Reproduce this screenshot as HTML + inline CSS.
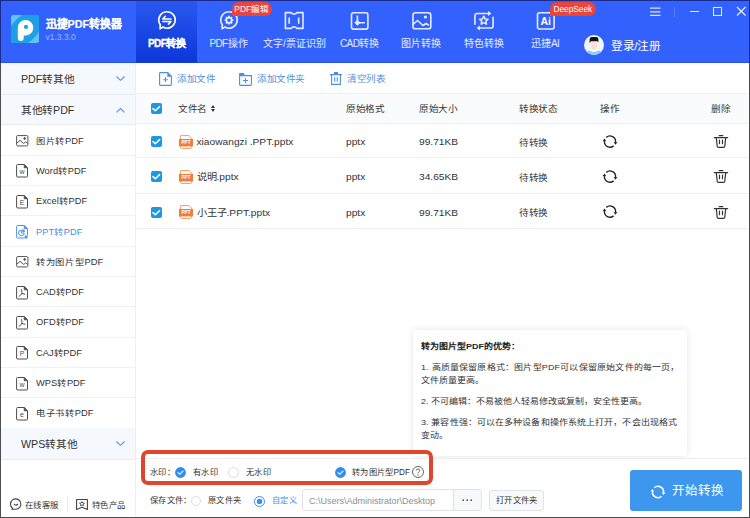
<!DOCTYPE html><html lang="zh-CN"><head><meta charset="utf-8"><style>
*{box-sizing:border-box;margin:0;padding:0}
html,body{width:750px;height:518px;overflow:hidden;background:#fff}
body{position:relative;font-family:"Liberation Sans",sans-serif;color:#333;font-size:10px}
.a{position:absolute;white-space:nowrap;line-height:1}
svg.a{overflow:visible}
.tl{position:absolute;top:39px;color:#e6ecff;font-size:10px;white-space:nowrap;line-height:1}
.badge{position:absolute;height:14.5px;background:#e9453b;color:#fff;font-size:8.3px;line-height:14.5px;border-radius:7px 7px 7px 1px;white-space:nowrap;text-align:center}
.sec{position:absolute;left:1px;width:134px;height:31px;background:#f5f8fd;border-bottom:1px solid #e8ecf2;font-size:11px;color:#333}
.sec .lat{letter-spacing:0}
.sec>span{position:absolute;left:19.8px;top:10.5px;line-height:1;transform:scale(.97);transform-origin:0 0}
.item{position:absolute;left:1px;width:134px;border-bottom:1px solid #eef1f5;font-size:9.6px;color:#333}
.item .lat{letter-spacing:0}
.item>span{position:absolute;left:35px;line-height:1;transform:scale(.97,.86);transform-origin:0 55%}
.item svg{position:absolute;left:15.3px;overflow:visible}
.cb{position:absolute;width:11px;height:11px;background:#1a98e2;border-radius:2px}
.cb svg{position:absolute;left:0;top:0}
.lat{letter-spacing:-0.6px}
.q{transform:scale(.96,.86);transform-origin:0 55%}
.qy{transform:scaleY(.9);transform-origin:0 55%}
.qt{transform:scaleY(.89);transform-origin:0 55%}
</style></head><body>
<div class="a" style="left:0;top:0;width:750px;height:63px;background:#3361fd"></div>
<div class="a" style="left:136px;top:0;width:61px;height:63px;background:linear-gradient(#2a59f0,#0b36d9)"></div>
<div class="a" style="left:0;top:62px;width:750px;height:1px;background:#1f3fc8;opacity:.5"></div>
<svg class="a" style="left:11px;top:15px" width="28" height="28" viewBox="0 0 28 28"><defs><clipPath id="lc"><rect width="28" height="28" rx="2.5"/></clipPath></defs><g clip-path="url(#lc)"><rect width="28" height="28" fill="#62c2f1"/><ellipse cx="14" cy="14" rx="24" ry="12.7" transform="rotate(-45 14 14)" fill="#1fa0e6"/><path fill="#fff" fill-rule="evenodd" d="M6.8 12.75A7.75 7.75 0 1 1 14.55 20.5H12.7V23Q12.7 25.9 9.75 25.9Q6.8 25.9 6.8 23Z M17.1 11.9A2.1 2.1 0 1 0 12.9 11.9A2.1 2.1 0 1 0 17.1 11.9Z"/></g></svg>
<div class="a" style="left:45.5px;top:18.5px;color:#fff;font-size:11px;font-weight:bold;-webkit-text-stroke:.2px #fff;transform:scaleX(.98);transform-origin:0 0">迅捷PDF转换器</div>
<div class="a" style="left:45.5px;top:33px;color:#9fb4fa;font-size:8.5px">v1.3.3.0</div>
<svg class="a" style="left:156.5px;top:10px" width="20" height="20" viewBox="0 0 20 20" fill="none" stroke="#fff" stroke-width="1.7" stroke-linejoin="round"><path d="M5.9 17.1 A8.2 8.2 0 1 0 3.28 14.7 L3.1 18.7Z"/><path d="M14 8.9H5.8L8.4 6.3M5.8 11.5H14L11.4 14.1" stroke-width="1.5" stroke-linecap="round"/></svg>
<div class="tl" style="left:148px;color:#fff;font-weight:bold;-webkit-text-stroke:.3px #fff"><span class="lat">PDF</span>转换</div>
<svg class="a" style="left:218.7px;top:10px" width="20" height="20" viewBox="0 0 20 20" fill="none" stroke="#e6ecff" stroke-width="1.7" stroke-linejoin="round"><path d="M5.9 17.1 A8.2 8.2 0 1 0 3.28 14.7 L3.1 18.7Z"/><circle cx="10" cy="10.2" r="2.6" stroke-width="1.6"/><path d="M12.80 10.00L14.40 10.00M11.98 11.98L13.11 13.11M10.00 12.80L10.00 14.40M8.02 11.98L6.89 13.11M7.20 10.00L5.60 10.00M8.02 8.02L6.89 6.89M10.00 7.20L10.00 5.60M11.98 8.02L13.11 6.89" transform="translate(0 .2)" stroke-width="1.8"/></svg>
<div class="tl" style="left:209.4px"><span class="lat">PDF</span>操作</div>
<div class="badge" style="left:232px;top:1.8px;width:39.5px;font-size:8.5px">PDF编辑</div>
<svg class="a" style="left:284px;top:11px" width="20" height="19" viewBox="0 0 20 19" fill="none" stroke="#e6ecff" stroke-width="1.6" stroke-linejoin="round"><path d="M1.4 1.6H7Q10 4.6 13 1.6H19V17.4H13Q10 14.4 7 17.4H1.4Z"/><path d="M5.2 6.4V12.8M14.7 6.4V12.8"/></svg>
<div class="tl" style="left:263px">文字/票证识别</div>
<svg class="a" style="left:350px;top:11px" width="20" height="20" viewBox="0 0 20 20" fill="none" stroke="#e6ecff" stroke-width="1.6"><rect x="1.5" y="1.8" width="16.4" height="16.3" rx="2.2"/><path d="M7.4 4.4V11.7H14.9"/><path d="M7.4 8.7L10.4 11.7L7.4 14.7L4.4 11.7Z" fill="#e6ecff" stroke="none"/></svg>
<div class="tl" style="left:340px"><span class="lat">CAD</span>转换</div>
<svg class="a" style="left:411px;top:11px" width="22" height="20" viewBox="0 0 22 20" fill="none" stroke="#e6ecff" stroke-width="1.6"><rect x="2" y="1.8" width="17.8" height="16" rx="2.4"/><path d="M2 13.5L6.5 9.5L12 14.5L15 12.5L17.5 14" stroke-linejoin="round" stroke-linecap="round"/><circle cx="14.4" cy="6" r="1.6" fill="#e6ecff" stroke="none"/></svg>
<div class="tl" style="left:401.2px">图片转换</div>
<svg class="a" style="left:473px;top:10px" width="22" height="21" viewBox="0 0 22 21" fill="none" stroke="#e6ecff" stroke-width="1.6" stroke-linecap="round"><path d="M1.9 14.2V5.8Q1.9 3.5 4.2 3.5H15.5"/><path d="M15 1L18.5 3.5L15 6Z" fill="#e6ecff" stroke="none"/><path d="M20.1 7.2V15.7Q20.1 18 17.8 18H6.5"/><path d="M7 15.5L3.5 18L7 20.5Z" fill="#e6ecff" stroke="none"/><path d="M10.8 6.2l1.3 2.7 2.9.35-2.15 2 .6 2.9-2.65-1.5-2.65 1.5.6-2.9-2.15-2 2.9-.35z" stroke-width="1.5" stroke-linejoin="round"/></svg>
<div class="tl" style="left:464px">特色转换</div>
<svg class="a" style="left:536px;top:11px" width="20" height="20" viewBox="0 0 20 20" fill="none" stroke="#e6ecff" stroke-width="1.6"><rect x="1.5" y="1.8" width="16.6" height="16.2" rx="2"/></svg>
<div class="a" style="left:540.5px;top:16px;color:#fff;font-size:10.5px;font-weight:bold">Ai</div>
<div class="tl" style="left:531px">迅捷<span class="lat">AI</span></div>
<div class="badge" style="left:549.7px;top:1.6px;width:46.3px">DeepSeek</div>
<div class="a" style="left:584px;top:35px;width:20px;height:20px;border-radius:50%;background:#f1f4f9;overflow:hidden">
<svg width="20" height="20" viewBox="0 0 20 20"><path d="M1 21 Q2.5 15.2 7.5 14.8 Q10 16 12.5 14.8 Q17.5 15.2 19 21z" fill="#8ad0ef"/><path d="M5.5 15.6 Q10 18.2 14.5 15.6 L13.2 13.6 Q10 15.4 6.8 13.6z" fill="#fff"/><ellipse cx="10" cy="10.6" rx="3" ry="4.4" fill="#fbdfd0"/><path d="M5.6 8.8 V4.2 Q5.6 1.9 8 1.9 H12 Q14.4 1.9 14.4 4.2 V7.6 Q14 6.3 12.9 6.3 H7.2 Q6.1 6.3 5.6 8.8z" fill="#121316"/></svg></div>
<div class="a" style="left:611px;top:40px;color:#fff;font-size:12px;transform:scale(.965);transform-origin:0 0">登录/注册</div>
<svg class="a" style="left:650px;top:7px" width="11" height="10" viewBox="0 0 11 10" stroke="#d9e1ff" stroke-width="1.2"><path d="M0 1.2h10.5M0 4.8h10.5M0 8.4h10.5"/></svg>
<div class="a" style="left:674px;top:7px;width:1px;height:10px;background:#5c7ef9"></div>
<div class="a" style="left:690px;top:10.5px;width:9px;height:1.3px;background:#e9eeff"></div>
<div class="a" style="left:713px;top:7.3px;width:9.2px;height:8.4px;border:1.3px solid #e9eeff"></div>
<svg class="a" style="left:737px;top:6.8px" width="8.5" height="8.5" viewBox="0 0 8.5 8.5" stroke="#e9eeff" stroke-width="1.2"><path d="M0 0L8.5 8.5M8.5 0L0 8.5"/></svg>
<div class="a" style="left:135px;top:63px;width:1px;height:455px;background:#eceff4"></div>
<div class="sec" style="top:63px;height:32px"><span><span class="lat">PDF</span>转其他</span><svg class="a" style="left:115px;top:12.8px" width="9" height="5" viewBox="0 0 9 5" fill="none" stroke="#5b91d8" stroke-width="1.1"><path d="M0.5 0.5 L4.5 4.3 L8.5 0.5"/></svg></div>
<div class="sec" style="top:95px;height:30px"><span style="top:9.5px">其他转<span class="lat">PDF</span></span><svg class="a" style="left:115px;top:12.5px" width="9" height="5" viewBox="0 0 9 5" fill="none" stroke="#5b91d8" stroke-width="1.1"><path d="M0.5 4.3 L4.5 0.5 L8.5 4.3"/></svg></div>
<div class="item" style="top:125.6px;height:30.3px"><svg style="top:9.6px" width="12.5" height="11.5" viewBox="0 0 13 12" fill="none" stroke="#4d4d4d" stroke-width="1"><rect x=".6" y=".6" width="11.8" height="10.8" rx="1.2"/><path d="M.8 8.6L4.2 5.6L8 8.8L10 7.2L12.2 8.8"/><circle cx="9" cy="3.6" r=".9" fill="#4d4d4d"/></svg><span style="top:10px">图片转<span class="lat">PDF</span></span></div>
<div class="item" style="top:155.9px;height:30.3px"><svg style="top:8.6px" width="12" height="13.5" viewBox="0 0 12 13.5" fill="none" stroke="#4d4d4d" stroke-width="1"><path d="M1.6 .5H8.2L11.5 3.8V12Q11.5 13 10.5 13H1.6Q.6 13 .6 12V1.5Q.6 .5 1.6 .5z"/><path d="M8.2 .5V3.8H11.5Z" stroke-width=".8" fill="#4d4d4d"/><text x="6" y="9.9" font-size="7" fill="#4d4d4d" stroke="none" text-anchor="middle" font-family="Liberation Sans">w</text></svg><span style="top:10px"><span class="lat">Word</span>转<span class="lat">PDF</span></span></div>
<div class="item" style="top:186.2px;height:30.3px"><svg style="top:8.6px" width="12" height="13.5" viewBox="0 0 12 13.5" fill="none" stroke="#4d4d4d" stroke-width="1"><path d="M1.6 .5H8.2L11.5 3.8V12Q11.5 13 10.5 13H1.6Q.6 13 .6 12V1.5Q.6 .5 1.6 .5z"/><path d="M8.2 .5V3.8H11.5Z" stroke-width=".8" fill="#4d4d4d"/><text x="6" y="9.9" font-size="7" fill="#4d4d4d" stroke="none" text-anchor="middle" font-family="Liberation Sans">E</text></svg><span style="top:10px"><span class="lat">Excel</span>转<span class="lat">PDF</span></span></div>
<div class="item" style="top:216.5px;height:30.3px;color:#4a8ee0"><svg style="top:8.6px" width="12" height="13.5" viewBox="0 0 12 13.5" fill="none" stroke="#4f94e4" stroke-width="1"><path d="M1.6 .5H8.2L11.5 3.8V12Q11.5 13 10.5 13H1.6Q.6 13 .6 12V1.5Q.6 .5 1.6 .5z"/><path d="M8.2 .5V3.8H11.5Z" stroke-width=".8" fill="#4f94e4"/><path d="M5.3 5A2.9 2.9 0 1 0 8.3 8H5.3z" stroke-width="1" stroke-linejoin="round"/><path d="M6.3 4.2A2.8 2.8 0 0 1 9 6.9H6.3z" fill="#4f94e4" stroke="none"/><circle cx="10" cy="12" r="1.9" fill="#4f94e4" stroke="#fff" stroke-width=".6"/></svg><span style="top:10px"><span class="lat">PPT</span>转<span class="lat">PDF</span></span></div>
<div class="item" style="top:246.8px;height:30.3px"><svg style="top:9.6px" width="12.5" height="11.5" viewBox="0 0 13 12" fill="none" stroke="#4d4d4d" stroke-width="1"><rect x=".6" y=".6" width="11.8" height="10.8" rx="1.2"/><path d="M.8 8.6L4.2 5.6L8 8.8L10 7.2L12.2 8.8"/><circle cx="9" cy="3.6" r=".9" fill="#4d4d4d"/></svg><span style="top:10px">转为图片型<span class="lat">PDF</span></span></div>
<div class="item" style="top:277.1px;height:30.3px"><svg style="top:8.6px" width="12" height="13.5" viewBox="0 0 12 13.5" fill="none" stroke="#4d4d4d" stroke-width="1"><path d="M1.6 .5H8.2L11.5 3.8V12Q11.5 13 10.5 13H1.6Q.6 13 .6 12V1.5Q.6 .5 1.6 .5z"/><path d="M8.2 .5V3.8H11.5Z" stroke-width=".8" fill="#4d4d4d"/><path d="M5.6 3.6Q5.9 5.8 6 7.6L3 10.4M6 7.6L8.9 8.2" stroke-width="1" stroke-linecap="round" stroke-linejoin="round"/></svg><span style="top:10px"><span class="lat">CAD</span>转<span class="lat">PDF</span></span></div>
<div class="item" style="top:307.4px;height:30.3px"><svg style="top:8.6px" width="12" height="13.5" viewBox="0 0 12 13.5" fill="none" stroke="#4d4d4d" stroke-width="1"><path d="M1.6 .5H8.2L11.5 3.8V12Q11.5 13 10.5 13H1.6Q.6 13 .6 12V1.5Q.6 .5 1.6 .5z"/><path d="M8.2 .5V3.8H11.5Z" stroke-width=".8" fill="#4d4d4d"/><path d="M5.6 3.6Q5.9 5.8 6 7.6L3 10.4M6 7.6L8.9 8.2" stroke-width="1" stroke-linecap="round" stroke-linejoin="round"/></svg><span style="top:10px"><span class="lat">OFD</span>转<span class="lat">PDF</span></span></div>
<div class="item" style="top:337.7px;height:30.3px"><svg style="top:8.6px" width="12" height="13.5" viewBox="0 0 12 13.5" fill="none" stroke="#4d4d4d" stroke-width="1"><path d="M1.6 .5H8.2L11.5 3.8V12Q11.5 13 10.5 13H1.6Q.6 13 .6 12V1.5Q.6 .5 1.6 .5z"/><path d="M8.2 .5V3.8H11.5Z" stroke-width=".8" fill="#4d4d4d"/><text x="6" y="9.9" font-size="7" fill="#4d4d4d" stroke="none" text-anchor="middle" font-family="Liberation Sans">P</text></svg><span style="top:10px"><span class="lat">CAJ</span>转<span class="lat">PDF</span></span></div>
<div class="item" style="top:368.0px;height:30.3px"><svg style="top:8.6px" width="12" height="13.5" viewBox="0 0 12 13.5" fill="none" stroke="#4d4d4d" stroke-width="1"><path d="M1.6 .5H8.2L11.5 3.8V12Q11.5 13 10.5 13H1.6Q.6 13 .6 12V1.5Q.6 .5 1.6 .5z"/><path d="M8.2 .5V3.8H11.5Z" stroke-width=".8" fill="#4d4d4d"/><text x="6" y="9.9" font-size="7" fill="#4d4d4d" stroke="none" text-anchor="middle" font-family="Liberation Sans">w</text></svg><span style="top:10px"><span class="lat">WPS</span>转<span class="lat">PDF</span></span></div>
<div class="item" style="top:398.3px;height:30.3px"><svg style="top:8.6px" width="12" height="13.5" viewBox="0 0 12 13.5" fill="none" stroke="#4d4d4d" stroke-width="1"><path d="M1.6 .5H8.2L11.5 3.8V12Q11.5 13 10.5 13H1.6Q.6 13 .6 12V1.5Q.6 .5 1.6 .5z"/><path d="M8.2 .5V3.8H11.5Z" stroke-width=".8" fill="#4d4d4d"/><text x="6" y="9.9" font-size="7" fill="#4d4d4d" stroke="none" text-anchor="middle" font-family="Liberation Sans">e</text></svg><span style="top:10px">电子书转<span class="lat">PDF</span></span></div>
<div class="sec" style="top:428px;height:32px"><span><span class="lat">WPS</span>转其他</span><svg class="a" style="left:115px;top:13px" width="9" height="5" viewBox="0 0 9 5" fill="none" stroke="#5b91d8" stroke-width="1.1"><path d="M0.5 0.5 L4.5 4.3 L8.5 0.5"/></svg></div>
<svg class="a" style="left:10px;top:497.6px" width="12" height="12" viewBox="0 0 12 12" fill="none" stroke="#444" stroke-width="1.1"><path d="M2.6 10.3A5.2 5.2 0 1 1 5.8 11.3H1.8z" stroke-linejoin="round"/><path d="M3.8 6Q5.8 8.2 8 6"/></svg>
<div class="a" style="left:25px;top:500.8px;font-size:9px;color:#333;transform:scale(.93);transform-origin:0 0">在线客服</div>
<div class="a" style="left:66.5px;top:497px;width:1px;height:14px;background:#e5e8ee"></div>
<svg class="a" style="left:76px;top:498.8px" width="12" height="11" viewBox="0 0 12 12" preserveAspectRatio="none" fill="none" stroke="#444" stroke-width="1.1"><path d="M.6 .6H11.4V11.4L6 9L.6 11.4z" stroke-linejoin="round"/><path d="M6 2.8l.8 1.6 1.7.2-1.3 1.1.4 1.7L6 6.5 4.4 7.4l.4-1.7L3.5 4.6l1.7-.2z" stroke-width=".9" stroke-linejoin="round"/></svg>
<div class="a" style="left:92px;top:500.8px;font-size:9px;color:#333;transform:scale(.93);transform-origin:0 0">特色产品</div>
<svg class="a" style="left:159px;top:72px" width="13" height="14" viewBox="0 0 13 14" fill="none" stroke="#4d8fe0" stroke-width="1.1"><path d="M1.5 .6H8.8L12.4 4.2V12.5Q12.4 13.4 11.5 13.4H1.5Q.6 13.4 .6 12.5V1.5Q.6 .6 1.5 .6z"/><path d="M8.3 .3L12.7 4.7H8.3z" fill="#4d8fe0" stroke="none"/><path d="M6.5 5.3V10M4.2 7.7H8.8"/></svg>
<div class="a q" style="left:176.5px;top:73.9px;font-size:10px;color:#4d8fe0">添加文件</div>
<svg class="a" style="left:239px;top:72.5px" width="13" height="13" viewBox="0 0 13 13" fill="none" stroke="#4d8fe0" stroke-width="1.1"><path d="M.6 2.6H12.4V11.5Q12.4 12.4 11.5 12.4H1.5Q.6 12.4 .6 11.5z"/><path d="M.1 .1H4.8L5.8 2.6H.1z" fill="#4d8fe0" stroke="none"/><path d="M6.5 5V10M4 7.5H9"/></svg>
<div class="a q" style="left:256.5px;top:73.9px;font-size:10px;color:#4d8fe0">添加文件夹</div>
<svg class="a" style="left:329.5px;top:72px" width="12" height="13" viewBox="0 0 12 13" fill="none" stroke="#4d8fe0" stroke-width="1.1"><path d="M0 2.6H12M1.6 2.6V12.4H10.4V2.6M4.7 5.2V9.8M7.3 5.2V9.8"/><path d="M4 0H8V2H4z" fill="#4d8fe0" stroke="none"/></svg>
<div class="a q" style="left:346.5px;top:73.9px;font-size:10px;color:#4d8fe0">清空列表</div>
<div class="a" style="left:136px;top:93px;width:612px;height:31px;background:#fafbfc;border-top:1px solid #eff0f3;border-bottom:1px solid #eeeff2"></div>
<div class="cb" style="left:151.2px;top:103px"><svg width="11" height="11" viewBox="0 0 11 11" fill="none" stroke="#fff" stroke-width="1.5" stroke-linecap="round" stroke-linejoin="round"><path d="M2 5.6L4.3 7.7L8.6 3.6"/></svg></div>
<div class="a q" style="left:177.5px;top:104px;font-size:10px;color:#333">文件名</div>
<div class="a q" style="left:345.5px;top:104px;font-size:10px;color:#333">原始格式</div>
<div class="a q" style="left:419px;top:104px;font-size:10px;color:#333">原始大小</div>
<div class="a q" style="left:519px;top:104px;font-size:10px;color:#333">转换状态</div>
<div class="a q" style="left:599.5px;top:104px;font-size:10px;color:#333">操作</div>
<div class="a q" style="left:711px;top:104px;font-size:10px;color:#333">删除</div>
<svg class="a" style="left:211.3px;top:105.3px" width="4" height="7" viewBox="0 0 4 7" fill="#333"><path d="M0 3H4L2 0z M0 4H4L2 7z"/></svg>
<div class="a" style="left:136px;top:123.30px;width:612px;height:35.15px;border-bottom:1px solid #eeeff2"></div>
<div class="cb" style="left:151.2px;top:136.2px"><svg width="11" height="11" viewBox="0 0 11 11" fill="none" stroke="#fff" stroke-width="1.5" stroke-linecap="round" stroke-linejoin="round"><path d="M2 5.6L4.3 7.7L8.6 3.6"/></svg></div>
<svg class="a" style="left:178.7px;top:134.7px" width="14" height="14" viewBox="0 0 14 14"><path d="M2 .6H10L12.6 3.2V12.4Q12.6 13.4 11.6 13.4H2.4Q1.4 13.4 1.4 12.4V1.2Q1.4 .6 2 .6z" fill="#fff" stroke="#f39a63" stroke-width="1"/><path d="M0 4H14V11.4H0z" fill="#f37d36"/><text x="7" y="9.4" font-size="4.6" fill="#fff" text-anchor="middle" font-family="Liberation Sans" font-weight="bold">PPT</text></svg>
<div class="a qy" style="left:196.5px;top:137.3px;font-size:10.2px;color:#333">xiaowangzi .PPT.pptx</div>
<div class="a qy" style="left:346px;top:137.3px;font-size:10.2px;color:#333">pptx</div>
<div class="a qy" style="left:419px;top:137.3px;font-size:10.2px;color:#333">99.71KB</div>
<div class="a q" style="left:519px;top:138.0px;font-size:10px;color:#333">待转换</div>
<svg class="a" style="left:602.5px;top:134.7px" width="14" height="14" viewBox="0 0 14 14"><path d="M3.33 2.37A5.6 5.6 0 0 1 12.58 7.09M10.60 10.89A5.6 5.6 0 0 1 1.42 6.11" fill="none" stroke="#1e1e1e" stroke-width="1.35"/><path d="M14.37 7.24L10.79 6.93L12.35 9.68zM-0.37 5.96L3.21 6.27L1.65 3.52z" fill="#1e1e1e"/></svg>
<svg class="a" style="left:714px;top:135.2px" width="14" height="13" viewBox="0 0 14 13" fill="none" stroke="#333" stroke-width="1.2"><path d="M.3 2.6H13.7M5.2 .7H8.8M2.3 2.6L3.2 11.3Q3.3 12.4 4.4 12.4H9.6Q10.7 12.4 10.8 11.3L11.7 2.6M5.5 5.2V8.7M8.5 5.2V8.7" stroke-linecap="round"/></svg>
<div class="a" style="left:136px;top:158.45px;width:612px;height:35.15px;border-bottom:1px solid #eeeff2"></div>
<div class="cb" style="left:151.2px;top:171.3px"><svg width="11" height="11" viewBox="0 0 11 11" fill="none" stroke="#fff" stroke-width="1.5" stroke-linecap="round" stroke-linejoin="round"><path d="M2 5.6L4.3 7.7L8.6 3.6"/></svg></div>
<svg class="a" style="left:178.7px;top:169.8px" width="14" height="14" viewBox="0 0 14 14"><path d="M2 .6H10L12.6 3.2V12.4Q12.6 13.4 11.6 13.4H2.4Q1.4 13.4 1.4 12.4V1.2Q1.4 .6 2 .6z" fill="#fff" stroke="#f39a63" stroke-width="1"/><path d="M0 4H14V11.4H0z" fill="#f37d36"/><text x="7" y="9.4" font-size="4.6" fill="#fff" text-anchor="middle" font-family="Liberation Sans" font-weight="bold">PPT</text></svg>
<div class="a qy" style="left:196.5px;top:172.4px;font-size:10.2px;color:#333">说明.pptx</div>
<div class="a qy" style="left:346px;top:172.4px;font-size:10.2px;color:#333">pptx</div>
<div class="a qy" style="left:419px;top:172.4px;font-size:10.2px;color:#333">34.65KB</div>
<div class="a q" style="left:519px;top:173.2px;font-size:10px;color:#333">待转换</div>
<svg class="a" style="left:602.5px;top:169.8px" width="14" height="14" viewBox="0 0 14 14"><path d="M3.33 2.37A5.6 5.6 0 0 1 12.58 7.09M10.60 10.89A5.6 5.6 0 0 1 1.42 6.11" fill="none" stroke="#1e1e1e" stroke-width="1.35"/><path d="M14.37 7.24L10.79 6.93L12.35 9.68zM-0.37 5.96L3.21 6.27L1.65 3.52z" fill="#1e1e1e"/></svg>
<svg class="a" style="left:714px;top:170.3px" width="14" height="13" viewBox="0 0 14 13" fill="none" stroke="#333" stroke-width="1.2"><path d="M.3 2.6H13.7M5.2 .7H8.8M2.3 2.6L3.2 11.3Q3.3 12.4 4.4 12.4H9.6Q10.7 12.4 10.8 11.3L11.7 2.6M5.5 5.2V8.7M8.5 5.2V8.7" stroke-linecap="round"/></svg>
<div class="a" style="left:136px;top:193.60px;width:612px;height:35.15px;border-bottom:1px solid #eeeff2"></div>
<div class="cb" style="left:151.2px;top:206.5px"><svg width="11" height="11" viewBox="0 0 11 11" fill="none" stroke="#fff" stroke-width="1.5" stroke-linecap="round" stroke-linejoin="round"><path d="M2 5.6L4.3 7.7L8.6 3.6"/></svg></div>
<svg class="a" style="left:178.7px;top:205.0px" width="14" height="14" viewBox="0 0 14 14"><path d="M2 .6H10L12.6 3.2V12.4Q12.6 13.4 11.6 13.4H2.4Q1.4 13.4 1.4 12.4V1.2Q1.4 .6 2 .6z" fill="#fff" stroke="#f39a63" stroke-width="1"/><path d="M0 4H14V11.4H0z" fill="#f37d36"/><text x="7" y="9.4" font-size="4.6" fill="#fff" text-anchor="middle" font-family="Liberation Sans" font-weight="bold">PPT</text></svg>
<div class="a qy" style="left:196.5px;top:207.6px;font-size:10.2px;color:#333">小王子.PPT.pptx</div>
<div class="a qy" style="left:346px;top:207.6px;font-size:10.2px;color:#333">pptx</div>
<div class="a qy" style="left:419px;top:207.6px;font-size:10.2px;color:#333">99.71KB</div>
<div class="a q" style="left:519px;top:208.3px;font-size:10px;color:#333">待转换</div>
<svg class="a" style="left:602.5px;top:205.0px" width="14" height="14" viewBox="0 0 14 14"><path d="M3.33 2.37A5.6 5.6 0 0 1 12.58 7.09M10.60 10.89A5.6 5.6 0 0 1 1.42 6.11" fill="none" stroke="#1e1e1e" stroke-width="1.35"/><path d="M14.37 7.24L10.79 6.93L12.35 9.68zM-0.37 5.96L3.21 6.27L1.65 3.52z" fill="#1e1e1e"/></svg>
<svg class="a" style="left:714px;top:205.5px" width="14" height="13" viewBox="0 0 14 13" fill="none" stroke="#333" stroke-width="1.2"><path d="M.3 2.6H13.7M5.2 .7H8.8M2.3 2.6L3.2 11.3Q3.3 12.4 4.4 12.4H9.6Q10.7 12.4 10.8 11.3L11.7 2.6M5.5 5.2V8.7M8.5 5.2V8.7" stroke-linecap="round"/></svg>
<div class="a" style="left:412.8px;top:329.6px;width:274px;height:126.4px;background:#fff;border-radius:3px;box-shadow:0 0 7px rgba(0,0,0,.11)"></div>
<div class="a qt" style="left:421px;top:342px;font-size:9px;font-weight:bold;color:#222">转为图片型PDF的优势：</div>
<div class="a qt" style="left:421px;top:362.5px;font-size:9px;color:#333;letter-spacing:.18px">1. 高质量保留原格式：图片型PDF可以保留原始文件的每一页，</div>
<div class="a qt" style="left:421px;top:375.5px;font-size:9px;color:#333">文件质量更高。</div>
<div class="a qt" style="left:421px;top:397px;font-size:9px;color:#333">2. 不可编辑：不易被他人轻易修改或复制，安全性更高。</div>
<div class="a qt" style="left:421px;top:417.5px;font-size:9px;color:#333;letter-spacing:.1px">3. 兼容性强：可以在多种设备和操作系统上打开，不会出现格式</div>
<div class="a qt" style="left:421px;top:431px;font-size:9px;color:#333">变动。</div>
<div class="a" style="left:136px;top:458px;width:612px;height:1px;background:#eceef2"></div>
<div class="a" style="left:149.5px;top:468.5px;font-size:9px;color:#333;transform:scale(.92);transform-origin:0 0">水印：</div>
<svg class="a" style="left:174.8px;top:466.8px" width="11" height="11" viewBox="0 0 11 11"><circle cx="5.5" cy="5.5" r="5.4" fill="#2f8ff0"/><path d="M3 5.7L4.8 7.3L8 4.1" fill="none" stroke="#fff" stroke-width="1.1" stroke-linecap="round"/></svg>
<div class="a" style="left:193px;top:468.5px;font-size:9px;color:#333;transform:scale(.92);transform-origin:0 0">有水印</div>
<div class="a" style="left:227.8px;top:466.8px;width:11px;height:11px;border-radius:50%;border:1px solid #d9dde4"></div>
<div class="a" style="left:246px;top:468.5px;font-size:9px;color:#333;transform:scale(.92);transform-origin:0 0">无水印</div>
<svg class="a" style="left:335px;top:466.8px" width="11" height="11" viewBox="0 0 11 11"><circle cx="5.5" cy="5.5" r="5.4" fill="#2f8ff0"/><path d="M3 5.7L4.8 7.3L8 4.1" fill="none" stroke="#fff" stroke-width="1.1" stroke-linecap="round"/></svg>
<div class="a" style="left:351.7px;top:468.5px;font-size:9px;color:#333;transform:scale(.92);transform-origin:0 0">转为图片型PDF</div>
<svg class="a" style="left:412px;top:466px" width="12" height="12" viewBox="0 0 12 12"><circle cx="6" cy="6" r="5.5" fill="none" stroke="#555" stroke-width=".9"/><path d="M4.3 4.6Q4.3 3 6 3Q7.7 3 7.7 4.5Q7.7 5.4 6.8 5.9Q6 6.3 6 7.3" fill="none" stroke="#555" stroke-width=".9"/><circle cx="6" cy="8.9" r=".6" fill="#555"/></svg>
<div class="a" style="left:141px;top:450px;width:291.5px;height:34.5px;border:4px solid #e1452c;border-radius:7px"></div>
<div class="a" style="left:150px;top:496.5px;font-size:9px;color:#333;transform:scale(.92);transform-origin:0 0">保存文件：</div>
<div class="a" style="left:190.5px;top:495.8px;width:10.5px;height:10.5px;border-radius:50%;border:1px solid #d9dde4"></div>
<div class="a" style="left:207.5px;top:496.5px;font-size:9px;color:#333;transform:scale(.92);transform-origin:0 0">原文件夹</div>
<svg class="a" style="left:254.3px;top:495.5px" width="11" height="11" viewBox="0 0 11 11"><circle cx="5.5" cy="5.5" r="5" fill="none" stroke="#3b8ff0" stroke-width="1"/><circle cx="5.5" cy="5.5" r="2.7" fill="#3b8ff0"/></svg>
<div class="a" style="left:271.6px;top:496.5px;font-size:9px;color:#3b8ff0;transform:scale(.92);transform-origin:0 0">自定义</div>
<div class="a" style="left:302.4px;top:489.3px;width:179.5px;height:21.5px;border:1px solid #dfe3e9;border-radius:3px;background:#fff"></div>
<div class="a" style="left:452.8px;top:490.3px;width:28.1px;height:19.5px;border-left:1px solid #dfe3e9;background:#f6f8fa;border-radius:0 2px 2px 0"></div>
<svg class="a" style="left:462px;top:499px" width="12" height="3" viewBox="0 0 12 3" fill="#555"><circle cx="1.2" cy="1.2" r=".9"/><circle cx="5.2" cy="1.2" r=".9"/><circle cx="9.2" cy="1.2" r=".9"/></svg>
<div class="a" style="left:309px;top:496.5px;font-size:9px;color:#8a909a">C:\Users\Administrator\Desktop</div>
<div class="a" style="left:488.8px;top:490px;width:55px;height:20.5px;border:1px solid #dfe3e9;border-radius:3px;background:#f8f9fb"></div>
<div class="a" style="left:495.7px;top:497.4px;font-size:9px;color:#333;transform:scale(.92);transform-origin:0 0">打开文件夹</div>
<div class="a" style="left:629.5px;top:470px;width:112.7px;height:41px;background:#3d97ee;border-radius:3px"></div>
<svg class="a" style="left:651px;top:484.6px" width="14" height="14" viewBox="0 0 14 14"><path d="M3.33 2.77A5.6 5.6 0 0 1 12.58 7.49M10.60 11.29A5.6 5.6 0 0 1 1.42 6.51" fill="none" stroke="#fff" stroke-width="1.5"/><path d="M14.37 7.64L10.79 7.33L12.35 10.08zM-0.37 6.36L3.21 6.67L1.65 3.92z" fill="#fff"/></svg>
<div class="a" style="left:672px;top:485px;font-size:12.5px;color:#fff">开始转换</div>
<div class="a" style="left:0;top:0;width:750px;height:518px;border:1px solid #4e4e4e;border-top-color:#1b2a8c;pointer-events:none"></div>
<div class="a" style="left:0;top:0;width:1px;height:63px;background:#1b2a8c"></div>
<div class="a" style="left:749px;top:0;width:1px;height:63px;background:#1b2a8c"></div>
</body></html>
